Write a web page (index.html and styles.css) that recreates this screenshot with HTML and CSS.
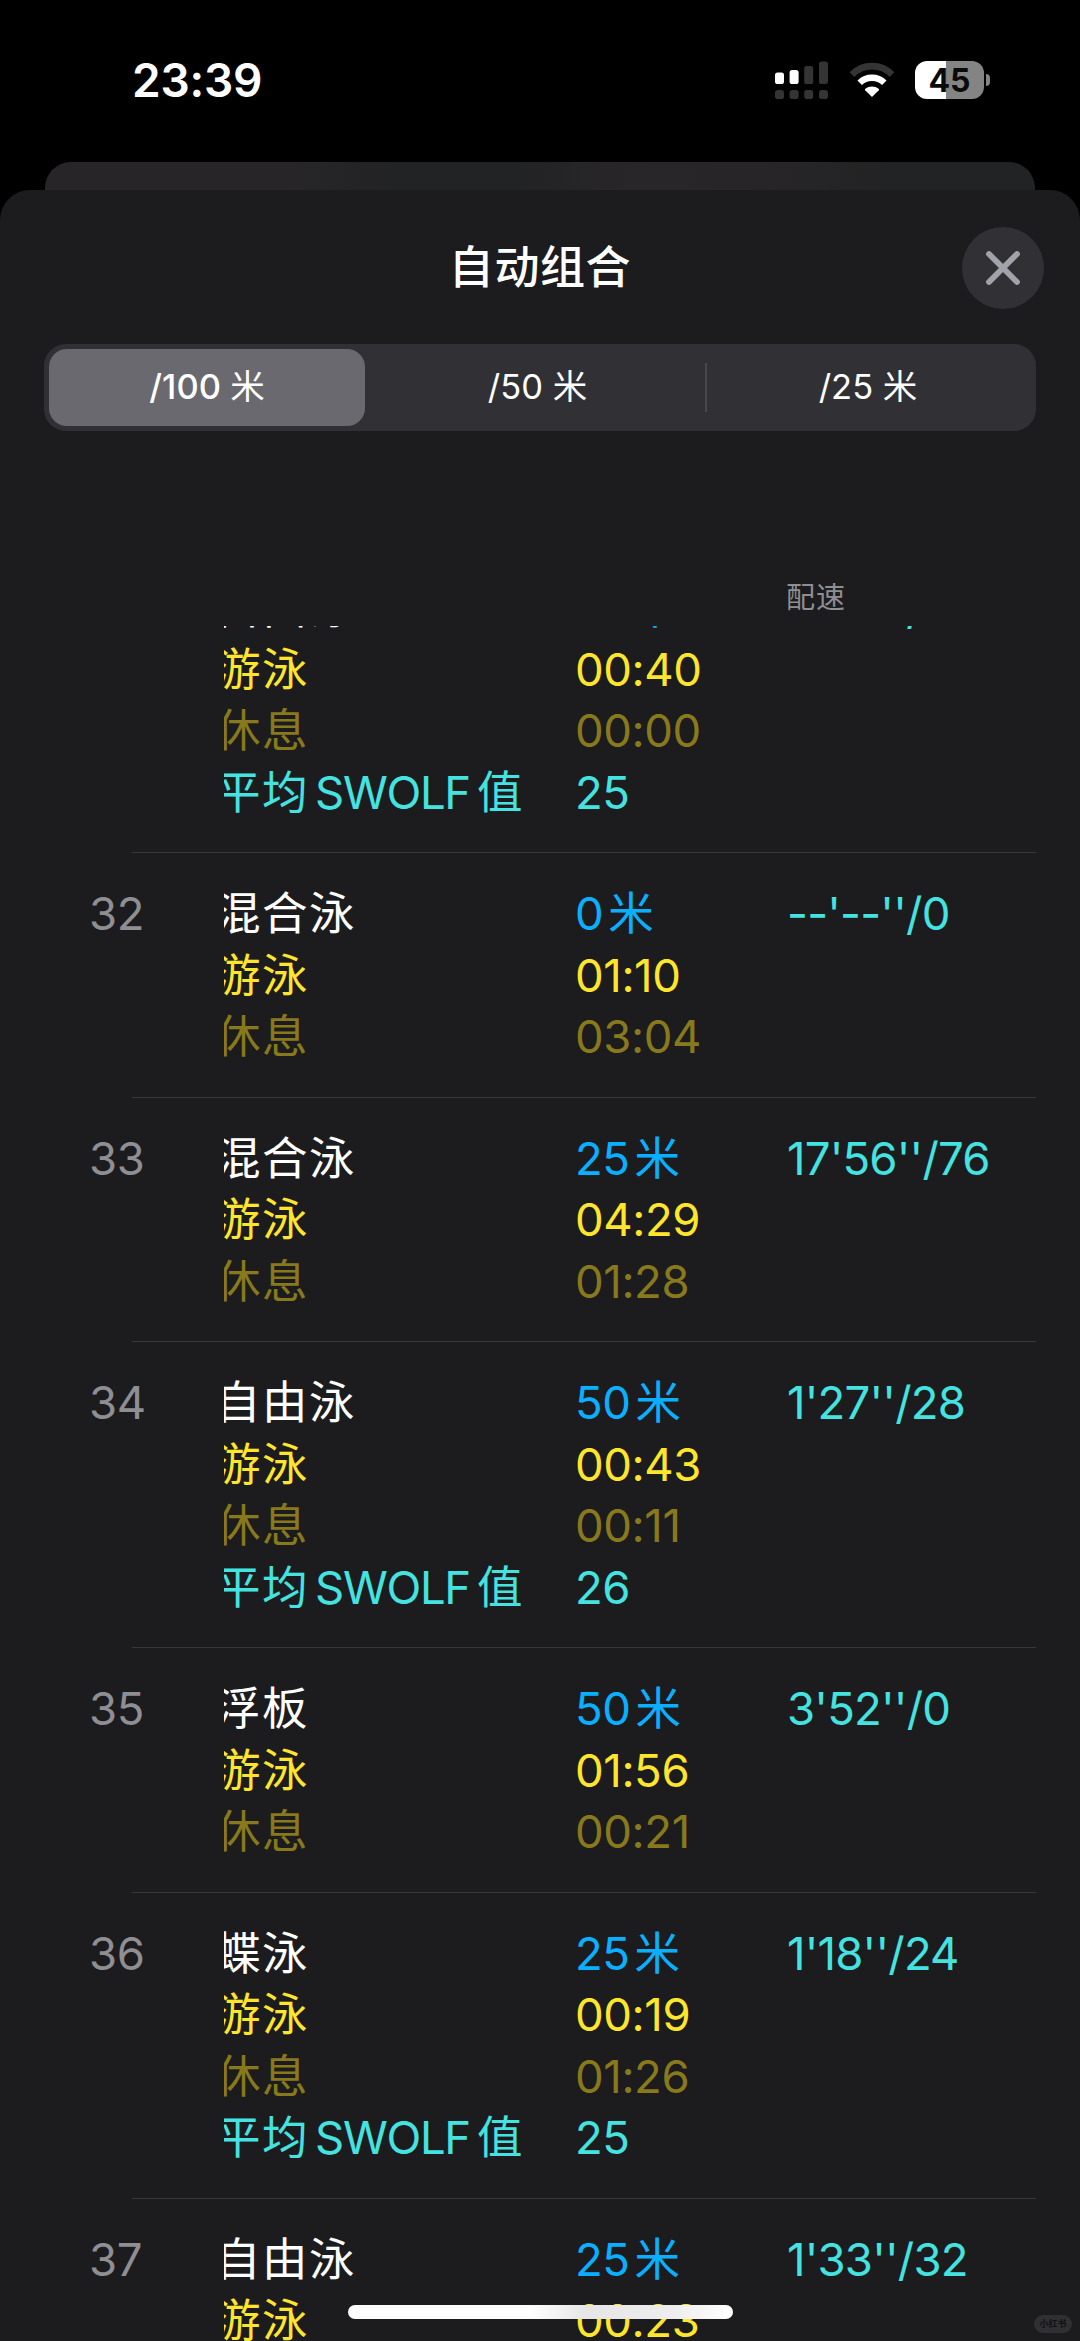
FILE: index.html
```html
<!DOCTYPE html>
<html lang="zh-CN">
<head>
  <meta charset="UTF-8">
  <meta name="viewport" content="width=device-width, initial-scale=1.0">
  <title>自动组合</title>
  <link rel="stylesheet" href="styles.css">
</head>
<body>
  <div class="status-bar">
    <span class="status-time">23:39</span>
    <div class="status-icons">
      <svg class="signal-icon" width="54" height="38" viewBox="0 0 54 38">
        <g fill="#fff">
          <rect x="0" y="11.5" width="9" height="11.5" rx="2.6"/>
          <rect x="14.6" y="9" width="9" height="14" rx="2.6"/>
        </g>
        <g fill="#343434">
          <rect x="29.2" y="5" width="9" height="18" rx="2.6"/>
          <rect x="44" y="0.5" width="9" height="22.5" rx="2.6"/>
          <rect x="0" y="29" width="9" height="9" rx="2.8"/>
          <rect x="14.6" y="29" width="9" height="9" rx="2.8"/>
          <rect x="29.2" y="29" width="9" height="9" rx="2.8"/>
          <rect x="44" y="29" width="9" height="9" rx="2.8"/>
        </g>
      </svg>
      <svg class="wifi-icon" width="46" height="36" viewBox="0 0 46 36">
        <path d="M3 12.6 A28 28 0 0 1 43 12.6" fill="none" stroke="#343434" stroke-width="6.8"/>
        <path d="M10.7 20.8 A17.6 17.6 0 0 1 35.3 20.8" fill="none" stroke="#fff" stroke-width="6.4"/>
        <path d="M23 35 L16.2 28.2 A1 1 0 0 1 16.3 26.8 A10.5 10.5 0 0 1 29.7 26.8 A1 1 0 0 1 29.8 28.2 Z" fill="#fff"/>
      </svg>
      <div class="battery">
        <div class="battery-body">45</div>
        <div class="battery-tip"></div>
      </div>
    </div>
  </div>

  <div class="back-card"></div>

  <div class="sheet">
    <div class="sheet-header">
      <h1 class="sheet-title">自动组合</h1>
      <button class="close-btn" aria-label="关闭">
        <svg width="40" height="40" viewBox="0 0 40 40">
          <path d="M6 6 L34 34 M34 6 L6 34" fill="none" stroke="#a2a2aa" stroke-width="5.8" stroke-linecap="round"/>
        </svg>
      </button>
    </div>

    <div class="segmented">
      <div class="segment active">/100 <span class="seg-unit">米</span></div>
      <div class="segment middle">/50 <span class="seg-unit">米</span></div>
      <div class="segment divided">/25 <span class="seg-unit">米</span></div>
    </div>

    <div class="table-head">
      <span class="head-pace">配速</span>
    </div>

    <div class="list">
      <div class="row first">
        <div class="num">31</div>
        <div class="names">
          <div class="stroke">自由泳</div>
          <div class="swim">游泳</div>
          <div class="rest">休息</div>
          <div class="swolf">平均<span class="latin">SWOLF</span>值</div>
        </div>
        <div class="values">
          <div class="dist">75<span class="unit">米</span></div>
          <div class="swim">00:40</div>
          <div class="rest">00:00</div>
          <div class="swolf">25</div>
        </div>
        <div class="pace">2'40''/25</div>
      </div>

      <div class="row">
        <div class="num">32</div>
        <div class="names">
          <div class="stroke">混合泳</div>
          <div class="swim">游泳</div>
          <div class="rest">休息</div>
        </div>
        <div class="values">
          <div class="dist">0<span class="unit">米</span></div>
          <div class="swim">01:10</div>
          <div class="rest">03:04</div>
        </div>
        <div class="pace">--'--''/0</div>
      </div>

      <div class="row">
        <div class="num">33</div>
        <div class="names">
          <div class="stroke">混合泳</div>
          <div class="swim">游泳</div>
          <div class="rest">休息</div>
        </div>
        <div class="values">
          <div class="dist">25<span class="unit">米</span></div>
          <div class="swim">04:29</div>
          <div class="rest">01:28</div>
        </div>
        <div class="pace">17'56''/76</div>
      </div>

      <div class="row">
        <div class="num">34</div>
        <div class="names">
          <div class="stroke">自由泳</div>
          <div class="swim">游泳</div>
          <div class="rest">休息</div>
          <div class="swolf">平均<span class="latin">SWOLF</span>值</div>
        </div>
        <div class="values">
          <div class="dist">50<span class="unit">米</span></div>
          <div class="swim">00:43</div>
          <div class="rest">00:11</div>
          <div class="swolf">26</div>
        </div>
        <div class="pace">1'27''/28</div>
      </div>

      <div class="row">
        <div class="num">35</div>
        <div class="names">
          <div class="stroke">浮板</div>
          <div class="swim">游泳</div>
          <div class="rest">休息</div>
        </div>
        <div class="values">
          <div class="dist">50<span class="unit">米</span></div>
          <div class="swim">01:56</div>
          <div class="rest">00:21</div>
        </div>
        <div class="pace">3'52''/0</div>
      </div>

      <div class="row">
        <div class="num">36</div>
        <div class="names">
          <div class="stroke">蝶泳</div>
          <div class="swim">游泳</div>
          <div class="rest">休息</div>
          <div class="swolf">平均<span class="latin">SWOLF</span>值</div>
        </div>
        <div class="values">
          <div class="dist">25<span class="unit">米</span></div>
          <div class="swim">00:19</div>
          <div class="rest">01:26</div>
          <div class="swolf">25</div>
        </div>
        <div class="pace">1'18''/24</div>
      </div>

      <div class="row">
        <div class="num">37</div>
        <div class="names">
          <div class="stroke">自由泳</div>
          <div class="swim">游泳</div>
        </div>
        <div class="values">
          <div class="dist">25<span class="unit">米</span></div>
          <div class="swim">00:23</div>
        </div>
        <div class="pace">1'33''/32</div>
      </div>
    </div>
  </div>

  <div class="home-indicator"></div>
  <div class="watermark">小红书</div>
</body>
</html>
```

FILE: styles.css
```css
* {
  box-sizing: border-box;
}

body {
  position: relative;
  margin: 0;
  width: 1080px;
  height: 2341px;
  overflow: hidden;
  display: flex;
  flex-direction: column;
  background: #000;
  color: #fff;
  font-family: Inter, "Noto Sans CJK SC", sans-serif;
}

/* Status bar */
.status-bar {
  flex: none;
  display: flex;
  justify-content: space-between;
  align-items: center;
  height: 162px;
  padding: 0 90px 2px 132px;
}

.status-time {
  font-size: 46px;
  font-weight: 580;
  letter-spacing: -0.2px;
  line-height: 56px;
}

.status-icons {
  display: flex;
  align-items: center;
}

.wifi-icon {
  margin-left: 20px;
}

.battery {
  display: flex;
  align-items: center;
  margin-left: 20px;
}

.battery-body {
  width: 69px;
  height: 38px;
  border-radius: 12px;
  background: linear-gradient(90deg, #fff 31px, #848484 31px);
  color: #0a0a0a;
  font-size: 32px;
  font-weight: 700;
  line-height: 39px;
  text-align: center;
}

.battery-tip {
  width: 4px;
  height: 12px;
  margin-left: 2px;
  border-radius: 0 4px 4px 0;
  background: #848484;
}

/* Sheet */
.back-card {
  flex: none;
  height: 28px;
  margin: 0 45px;
  border-radius: 26px 26px 0 0;
  background: linear-gradient(90deg, #272528 0%, #272528 25%, #222324 35%, #222324 48%, #292629 60%, #282528 72%, #222324 85%, #222324 100%);
}

.sheet {
  flex: 1;
  min-height: 0;
  display: flex;
  flex-direction: column;
  border-radius: 30px 30px 0 0;
  background: #1c1c1e;
}

.sheet-header {
  flex: none;
  display: grid;
  grid-template-columns: 82px 1fr 82px;
  align-items: center;
  height: 154px;
  padding: 2px 36px 0;
}

.sheet-title {
  grid-column: 2;
  margin: 0;
  font-size: 45px;
  font-weight: 500;
  letter-spacing: 0.6px;
  line-height: 60px;
  text-align: center;
}

.close-btn {
  display: flex;
  justify-content: center;
  align-items: center;
  width: 82px;
  height: 82px;
  padding: 0;
  border: none;
  border-radius: 50%;
  background: #313135;
}

.segmented {
  flex: none;
  display: grid;
  grid-template-columns: 316px 340px 1fr;
  height: 87px;
  margin: 0 44px;
  padding: 5px;
  border-radius: 22px;
  background: #313135;
}

.segment {
  font-size: 34.5px;
  line-height: 75px;
  text-align: center;
}

.segment.active {
  border-radius: 18px;
  background: #6a696f;
  font-weight: 500;
}

.segment.middle {
  padding-left: 5px;
}

.segment.divided {
  background: linear-gradient(#48484c, #48484c) no-repeat left center / 2px 49px;
}

.seg-unit {
  font-weight: 400;
}

/* Table */
.table-head {
  flex: none;
  display: flex;
  align-items: flex-end;
  height: 195px;
  padding: 0 0 8px 786px;
  color: #8e8e93;
}

.head-pace {
  font-size: 29px;
  letter-spacing: 1px;
  line-height: 40px;
}

.list {
  flex: 1;
  min-height: 0;
  overflow: hidden;
}

.row {
  display: grid;
  grid-template-columns: 135px 351px 212px 1fr;
  padding: 31px 0 29px 89px;
  font-size: 45.5px;
  line-height: 61.5px;
  letter-spacing: -0.4px;
  background: linear-gradient(#38383a, #38383a) no-repeat 132px 0 / 904px 1px;
}

/* partly scrolled under the header */
.row.first {
  margin-top: -80px;
}

.num {
  color: #8e8e93;
}

/* labels start slightly left of the column and get cut by it */
.names {
  overflow: hidden;
  text-indent: -9px;
  letter-spacing: 1.5px;
  white-space: nowrap;
}

.latin {
  margin: 0 7px 0 6px;
  letter-spacing: -1.3px;
}

.unit {
  margin-left: 5px;
}

.dist {
  color: #0ab0ff;
}

.swim {
  color: #ffe62c;
}

.rest {
  color: #87791c;
}

.swolf,
.pace {
  color: #44e3e0;
}

.pace {
  letter-spacing: -0.8px;
}

/* Overlays */
.home-indicator {
  position: absolute;
  left: 348px;
  top: 2305px;
  width: 385px;
  height: 14px;
  border-radius: 7px;
  background: linear-gradient(90deg, #fff 0%, #fff 47%, #e6e6e6 62%, #eee 85%, #fff 100%);
}

.watermark {
  position: absolute;
  left: 1034px;
  top: 2315px;
  width: 38px;
  height: 18px;
  border-radius: 9px;
  background: #303032;
  color: #111113;
  font-size: 9px;
  font-weight: 700;
  line-height: 18px;
  text-align: center;
}
```
